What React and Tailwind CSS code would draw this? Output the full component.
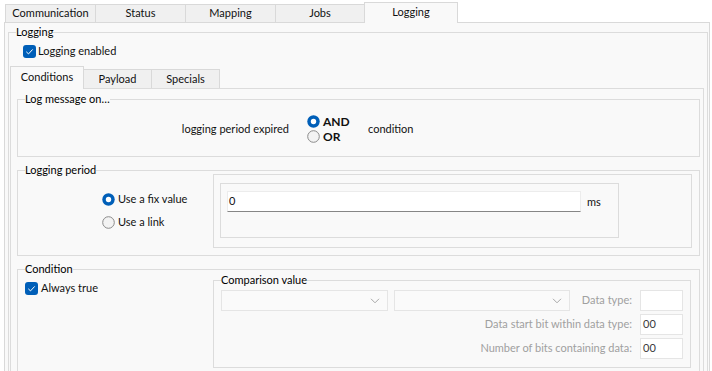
import React from "react";

const Check = () => (
  <svg width="13" height="13" viewBox="0 0 13 13" className="shrink-0">
    <rect x="0" y="0" width="13" height="13" rx="3" fill="#005fb8" />
    <path d="M3.3 6.8 L5.5 8.9 L9.7 4.4" fill="none" stroke="#ffffff" strokeWidth="1" />
  </svg>
);

const Radio = ({ on }) => (
  <svg width="13" height="13" viewBox="0 0 13 13" className="shrink-0">
    {on ? (
      <>
        <circle cx="6.5" cy="6.5" r="6.2" fill="#005fb8" />
        <circle cx="6.5" cy="6.5" r="2.7" fill="#ffffff" />
      </>
    ) : (
      <circle cx="6.5" cy="6.5" r="5.8" fill="#f3f3f3" stroke="#8a8a8a" strokeWidth="1" />
    )}
  </svg>
);

const Chevron = () => (
  <svg width="10" height="6" viewBox="0 0 10 6" className="shrink-0">
    <path d="M1 0.8 L5 4.8 L9 0.8" fill="none" stroke="#a8a8a8" strokeWidth="1" />
  </svg>
);

const Group = ({ label, className = "", children }) => (
  <div className={"relative border border-[#dcdcdc] " + className}>
    <span className="absolute left-[7px] top-[-8px] bg-[#f9f9f9] leading-[14px] text-black">{label}</span>
    {children}
  </div>
);

export default function App() {
  return (
    <div
      className="w-[712px] h-[371px] overflow-hidden bg-white text-[11px] text-[#111]"
      style={{ fontFamily: 'Lato, "Noto Sans", sans-serif' }}
    >
      {/* top tabs */}
      <div className="flex h-[22px] items-end pl-[5px]">
        <div className="flex h-[18px] w-[90px] items-center justify-center border-l border-t border-[#d9d9d9] bg-[#f0f0f0]">Communication</div>
        <div className="flex h-[18px] w-[90px] items-center justify-center border-l border-t border-[#d9d9d9] bg-[#f0f0f0]">Status</div>
        <div className="flex h-[18px] w-[90px] items-center justify-center border-l border-t border-[#d9d9d9] bg-[#f0f0f0]">Mapping</div>
        <div className="flex h-[18px] w-[89px] items-center justify-center border-l border-t border-[#d9d9d9] bg-[#f0f0f0]">Jobs</div>
        <div className="relative z-10 -mb-px flex h-[21px] w-[94px] items-start justify-center border-l border-r border-t border-[#d9d9d9] bg-[#f9f9f9] pt-[1px]">Logging</div>
      </div>

      {/* main panel */}
      <div className="ml-[4px] h-[360px] w-[706px] border border-[#d9d9d9] bg-[#f9f9f9] pl-[3px] pr-[1px]">
        <Group label="Logging" className="mt-[9px] h-[400px]">
          <div className="ml-[14px] mt-[10px] flex h-[16px] items-center gap-[2px]">
            <Check />
            <span>Logging enabled</span>
          </div>

          {/* inner tabs */}
          <div className="ml-[1px] mt-[7px] flex h-[22px] items-end">
            <div className="relative z-10 -mb-px flex h-[23px] w-[74px] items-start justify-center border-l border-r border-t border-[#d9d9d9] bg-[#f9f9f9] pt-[2px]">Conditions</div>
            <div className="flex h-[19px] w-[68px] items-center justify-center border-r border-t border-[#d9d9d9] bg-[#f0f0f0]">Payload</div>
            <div className="flex h-[19px] w-[68px] items-center justify-center border-r border-t border-[#d9d9d9] bg-[#f0f0f0]">Specials</div>
          </div>

          {/* inner panel */}
          <div className="ml-[1px] mr-[3px] h-[400px] border border-[#dcdcdc] pl-[6px] pr-[3px]">
            {/* Log message on */}
            <Group label="Log message on…" className="mt-[10px] h-[58px]">
              <div className="mt-[14px] flex items-center">
                <div className="w-[271px] text-right">logging period expired</div>
                <div className="ml-[18px] flex w-[61px] flex-col">
                  <div className="flex h-[15px] items-center gap-[3px] text-[12px] font-bold">
                    <Radio on />
                    <span>AND</span>
                  </div>
                  <div className="flex h-[15px] items-center gap-[3px] text-[12px] font-bold">
                    <Radio />
                    <span>OR</span>
                  </div>
                </div>
                <div>condition</div>
              </div>
            </Group>

            {/* Logging period */}
            <Group label="Logging period" className="mt-[13px] h-[86px]">
              <div className="flex">
                <div className="ml-[84px] mt-[20px] flex w-[111px] flex-col gap-[7px]">
                  <div className="flex h-[16px] items-center gap-[3px]">
                    <Radio on />
                    <span>Use a fix value</span>
                  </div>
                  <div className="flex h-[16px] items-center gap-[3px]">
                    <Radio />
                    <span>Use a link</span>
                  </div>
                </div>
                <div className="mt-[3px] h-[74px] w-[479px] border border-[#dcdcdc] pl-[6px] pt-[8px]">
                  <div className="flex h-[55px] w-[399px] items-start border border-[#dcdcdc] pl-[6px] pt-[7px]">
                    <div className="flex h-[21px] w-[354px] items-center border border-[#ececec] border-b-[#868686] bg-white pl-[1px]">0</div>
                    <span className="ml-[6px] mt-[3px]">ms</span>
                  </div>
                </div>
              </div>
            </Group>

            {/* Condition */}
            <Group label="Condition" className="mt-[13px] h-[120px]">
              <div className="flex items-start">
                <div className="w-[195px] pl-[7px] pt-[10px]">
                  <div className="flex h-[16px] items-center gap-[3px]">
                    <Check />
                    <span>Always true</span>
                  </div>
                </div>
                <Group label="Comparison value" className="mt-[10px] h-[88px] w-[478px]">
                  <div className="flex flex-col gap-[3px] pl-[7px] pr-[7px] pt-[9px] text-[#a0a0a0]">
                    <div className="flex h-[21px] items-center">
                      <div className="flex h-[21px] w-[167px] items-center justify-end border border-[#e5e5e5] bg-[#fafafa] pr-[7px]">
                        <Chevron />
                      </div>
                      <div className="ml-[6px] flex h-[21px] w-[176px] items-center justify-end border border-[#e5e5e5] bg-[#fafafa] pr-[7px]">
                        <Chevron />
                      </div>
                      <span className="ml-auto">Data type:</span>
                      <div className="ml-[8px] h-[21px] w-[43px] border border-[#e5e5e5] bg-white" />
                    </div>
                    <div className="flex h-[21px] items-center justify-end">
                      <span>Data start bit within data type:</span>
                      <div className="ml-[8px] flex h-[21px] w-[43px] items-center border border-[#e5e5e5] bg-white pl-[2px] text-[#3a3a3a]">00</div>
                    </div>
                    <div className="flex h-[21px] items-center justify-end">
                      <span>Number of bits containing data:</span>
                      <div className="ml-[8px] flex h-[21px] w-[43px] items-center border border-[#e5e5e5] bg-white pl-[2px] text-[#3a3a3a]">00</div>
                    </div>
                  </div>
                </Group>
              </div>
            </Group>
          </div>
        </Group>
      </div>
    </div>
  );
}
